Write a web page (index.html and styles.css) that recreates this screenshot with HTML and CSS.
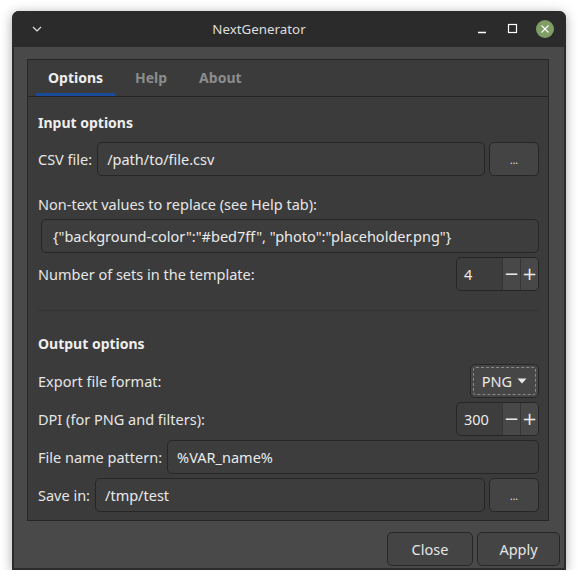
FILE: index.html
```html
<!DOCTYPE html>
<html>
<head>
<meta charset="utf-8">
<link rel="stylesheet" href="styles.css">
</head>
<body>
<div class="window">
  <div class="titlebar">
    <svg class="menu-icon" width="12" height="8" viewBox="0 0 12 8"><path d="M2 2 L6 6 L10 2" fill="none" stroke="#e0e0e0" stroke-width="1.2"/></svg>
    <div class="title">NextGenerator</div>
    <div class="controls">
      <svg width="14" height="14" viewBox="0 0 14 14"><path d="M2 10.5 H10" stroke="#ffffff" stroke-width="1.3"/></svg>
      <svg width="14" height="14" viewBox="0 0 14 14"><rect x="2.5" y="2.5" width="8" height="8" fill="none" stroke="#ffffff" stroke-width="1.2"/></svg>
      <svg class="close" width="18" height="18" viewBox="0 0 18 18"><circle cx="9" cy="9" r="9" fill="#7e9e66"/><path d="M5.5 5.5 L12.5 12.5 M12.5 5.5 L5.5 12.5" stroke="#ffffff" stroke-width="1.1"/></svg>
    </div>
  </div>
  <div class="body">
    <div class="frame">
      <div class="tabs">
        <div class="tab active">Options</div>
        <div class="tab">Help</div>
        <div class="tab">About</div>
      </div>
      <div class="content">
        <div class="heading h-input">Input options</div>
        <div class="row">
          <span class="label">CSV file:</span>
          <div class="input grow">/path/to/file.csv</div>
          <div class="btn dots">...</div>
        </div>
        <div class="label line nontext">Non-text values to replace (see Help tab):</div>
        <div class="row r-values">
          <div class="input grow json">{"background-color":"#bed7ff", "photo":"placeholder.png"}</div>
        </div>
        <div class="row r-spin">
          <span class="label grow">Number of sets in the template:</span>
          <div class="spin"><span class="spin-val">4</span><span class="spin-btn">&minus;</span><span class="spin-btn">+</span></div>
        </div>
        <div class="separator"></div>
        <div class="heading h-output">Output options</div>
        <div class="row">
          <span class="label grow">Export file format:</span>
          <div class="combo"><span class="combo-inner">PNG <svg width="10" height="6" viewBox="0 0 10 6"><path d="M0.5 0.5 H9.5 L5 5.5 Z" fill="#e8e8e8"/></svg></span></div>
        </div>
        <div class="row r-gap">
          <span class="label grow">DPI (for PNG and filters):</span>
          <div class="spin"><span class="spin-val">300</span><span class="spin-btn">&minus;</span><span class="spin-btn">+</span></div>
        </div>
        <div class="row r-gap">
          <span class="label">File name pattern:</span>
          <div class="input grow">%VAR_name%</div>
        </div>
        <div class="row r-gap">
          <span class="label">Save in:</span>
          <div class="input grow">/tmp/test</div>
          <div class="btn dots">...</div>
        </div>
      </div>
    </div>
    <div class="footer">
      <div class="btn fbtn close-btn">Close</div>
      <div class="btn fbtn apply-btn">Apply</div>
    </div>
  </div>
</div>
</body>
</html>
```

FILE: styles.css
```css
html, body {
  margin: 0;
  padding: 0;
  background: #ffffff;
}
body {
  font-family: "Noto Sans", "DejaVu Sans", sans-serif;
  font-size: 14.5px;
  color: #e6e6e6;
  padding: 11px 0 0 12px;
}
.window {
  width: 554px;
  height: 559px;
  display: flex;
  flex-direction: column;
  border-radius: 7px 7px 0 0;
  background: #2b2b2b;
  box-shadow: 0 2px 12px rgba(0, 0, 0, 0.35);
  overflow: hidden;
}
.titlebar {
  height: 36px;
  flex: 0 0 36px;
  display: flex;
  align-items: center;
  position: relative;
  background: #2b2b2b;
}
.menu-icon {
  margin-left: 19px;
}
.title {
  position: absolute;
  left: 0;
  right: 60px;
  text-align: center;
  top: 8px;
  color: #dedede;
  font-size: 13.33px;
  line-height: 20px;
  pointer-events: none;
}
.controls {
  margin-left: auto;
  margin-right: 12px;
  display: flex;
  align-items: center;
  gap: 16px;
}
.body {
  flex: 1;
  background: #494949;
  margin: 0 2px 2px 2px;
  padding: 12px 4px 0 13px;
  display: flex;
  flex-direction: column;
}
.frame {
  width: 522px;
  height: 462px;
  box-sizing: border-box;
  border: 1px solid #262626;
  background: #3b3b3b;
  display: flex;
  flex-direction: column;
}
.tabs {
  height: 36px;
  flex: 0 0 36px;
  border-bottom: 1px solid #262626;
  display: flex;
  padding-left: 8px;
}
.tab {
  height: 36px;
  box-sizing: border-box;
  padding: 0 10px;
  font-weight: bold;
  color: #8c8c8c;
  font-size: 14px;
  border-bottom: 3px solid transparent;
  line-height: 36px;
}
.tab.active {
  color: #eeeeee;
  border-bottom-color: #1b4b98;
  padding: 0 12px;
  width: 79px;
  text-align: center;
}
.tabs .tab:nth-child(2) { margin-left: 10px; }
.tabs .tab:nth-child(3) { margin-left: 12px; }
.content {
  padding: 0 9px 0 10px;
  display: flex;
  flex-direction: column;
}
.heading {
  font-weight: bold;
  font-size: 14px;
  line-height: 20px;
  height: 20px;
  color: #eeeeee;
}
.h-input {
  margin-top: 16px;
  margin-bottom: 9px;
}
.h-output {
  margin-top: 23px;
  margin-bottom: 10px;
}
.row {
  display: flex;
  align-items: center;
  height: 34px;
  gap: 4px;
}
.r-gap {
  margin-top: 4px;
}
.label {
  line-height: 20px;
  color: #e6e6e6;
  margin-right: 1px;
}
.line {
  display: block;
}
.nontext {
  margin-top: 18px;
  margin-bottom: 5px;
}
.r-spin {
  margin-top: 4px;
}
.grow {
  flex: 1;
}
.input {
  height: 34px;
  box-sizing: border-box;
  border: 1px solid #262626;
  border-radius: 5px;
  background: #3d3d3d;
  padding-left: 9px;
  line-height: 32px;
  color: #eaeaea;
  white-space: nowrap;
  overflow: hidden;
}
.r-values {
  padding-left: 3px;
}
.json {
  padding-left: 11px;
}
.btn {
  height: 34px;
  box-sizing: border-box;
  border: 1px solid #262626;
  border-radius: 5px;
  background: #444444;
  display: flex;
  align-items: center;
  justify-content: center;
  color: #e6e6e6;
}
.dots {
  width: 50px;
  font-size: 10px;
  padding-top: 2px;
}
.spin {
  width: 83px;
  height: 34px;
  box-sizing: border-box;
  border: 1px solid #262626;
  border-radius: 5px;
  background: #3d3d3d;
  display: flex;
  overflow: hidden;
}
.spin-val {
  flex: 1;
  padding-left: 7px;
  line-height: 32px;
  color: #eaeaea;
}
.spin-btn {
  width: 17px;
  text-align: center;
  background: #484848;
  border-left: 1px solid #363636;
  line-height: 31px;
  font-size: 18px;
  color: #e8e8e8;
  font-family: "DejaVu Sans", sans-serif;
}
.combo {
  width: 69px;
  height: 34px;
  box-sizing: border-box;
  border: 1px solid #262626;
  border-radius: 5px;
  background: #464646;
  padding: 2px;
}
.combo-inner {
  display: flex;
  align-items: center;
  justify-content: center;
  gap: 5px;
  height: 100%;
  box-sizing: border-box;
  border: 1px dashed #8a8a8a;
  border-radius: 3px;
  color: #eaeaea;
}
.separator {
  height: 1px;
  background: #333333;
  margin-top: 19px;
}
.footer {
  display: flex;
  justify-content: flex-end;
  gap: 4px;
  margin-top: 11px;
}
.fbtn {
  height: 34px;
  background: #444444;
}
.close-btn {
  width: 86px;
}
.apply-btn {
  width: 83px;
}
```
